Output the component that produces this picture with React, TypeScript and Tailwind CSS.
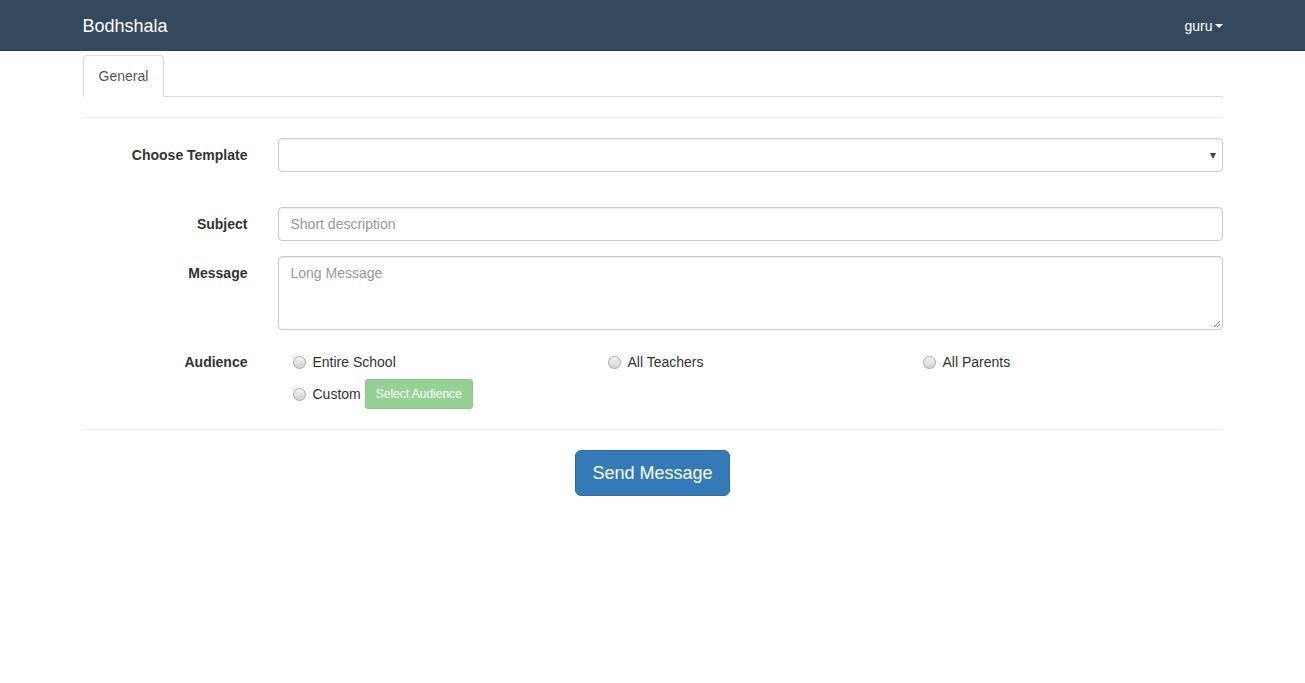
import React from "react";

function Radio({ label }: { label: string }) {
    return (
        <label className="flex items-center h-5">
            <span className="w-[13px] h-[13px] rounded-full border border-[#a9a9a9] bg-gradient-to-b from-[#f4f4f4] to-[#d2d2d2] ml-[15px] mr-[7px] shrink-0" />
            <span>{label}</span>
        </label>
    );
}

export default function App() {
    return (
        <div className="min-h-screen bg-white text-[14px] text-[#333] font-['Liberation_Sans',Arial,sans-serif] leading-[20px]">
            <nav className="h-[51px] bg-[#34495e] border-b border-[#2c3e50]">
                <div className="w-[1140px] mx-auto flex items-center justify-between h-[50px] pt-px">
                    <span className="text-[18px] text-white">Bodhshala</span>
                    <span className="flex items-center text-white">
                        guru
                        <span className="ml-[2px] w-0 h-0 border-l-4 border-r-4 border-t-4 border-l-transparent border-r-transparent border-t-white" />
                    </span>
                </div>
            </nav>

            <div className="w-[1140px] mx-auto">
                <div className="flex border-b border-[#ddd] mt-1">
                    <div className="-mb-px px-[15px] py-[10px] border border-[#ddd] border-b-white rounded-t bg-white text-[#555]">
                        General
                    </div>
                </div>

                <hr className="border-t border-[#eee] mt-5 mb-5" />

                <div className="flex mb-[35px]">
                    <div className="w-[180px] text-right font-bold pt-[7px] pr-[15px] shrink-0">Choose Template</div>
                    <div className="flex-1 pl-[15px]">
                        <div className="relative h-[34px] border border-[#ccc] rounded shadow-[inset_0_1px_1px_rgba(0,0,0,0.075)]">
                            <span className="absolute right-[6px] top-[14px] w-0 h-0 border-l-[3.5px] border-r-[3.5px] border-t-[6px] border-l-transparent border-r-transparent border-t-[#444]" />
                        </div>
                    </div>
                </div>

                <div className="flex mb-[15px]">
                    <div className="w-[180px] text-right font-bold pt-[7px] pr-[15px] shrink-0">Subject</div>
                    <div className="flex-1 pl-[15px]">
                        <div className="h-[34px] border border-[#ccc] rounded px-3 py-[6px] text-[#999] shadow-[inset_0_1px_1px_rgba(0,0,0,0.075)]">
                            Short description
                        </div>
                    </div>
                </div>

                <div className="flex mb-[15px]">
                    <div className="w-[180px] text-right font-bold pt-[7px] pr-[15px] shrink-0">Message</div>
                    <div className="flex-1 pl-[15px]">
                        <div className="relative h-[74px] border border-[#ccc] rounded px-3 py-[6px] text-[#999] shadow-[inset_0_1px_1px_rgba(0,0,0,0.075)]">
                            Long Message
                            <svg className="absolute right-[1px] bottom-[1px]" width="8" height="8" viewBox="0 0 8 8">
                                <path d="M1 7 L7 1 M4 7 L7 4" stroke="#888" strokeWidth="1" />
                            </svg>
                        </div>
                    </div>
                </div>

                <div className="flex">
                    <div className="w-[180px] text-right font-bold pt-[7px] pr-[15px] shrink-0">Audience</div>
                    <div className="flex-1 pl-[15px] pt-[7px]">
                        <div className="grid grid-cols-3">
                            <Radio label="Entire School" />
                            <Radio label="All Teachers" />
                            <Radio label="All Parents" />
                        </div>
                        <div className="flex items-center mt-[7px]">
                            <Radio label="Custom" />
                            <button className="ml-[4px] h-[30px] px-[10px] rounded-[3px] bg-[#95d195] border border-[#8ccb8c] text-white text-[12px]">
                                Select Audience
                            </button>
                        </div>
                    </div>
                </div>

                <hr className="border-t border-[#eee] mt-[20px] mb-[20px]" />

                <div className="flex justify-center">
                    <button className="h-[46px] px-4 rounded-md bg-[#337ab7] border border-[#2e6da4] text-white text-[18px]">
                        Send Message
                    </button>
                </div>
            </div>
        </div>
    );
}
